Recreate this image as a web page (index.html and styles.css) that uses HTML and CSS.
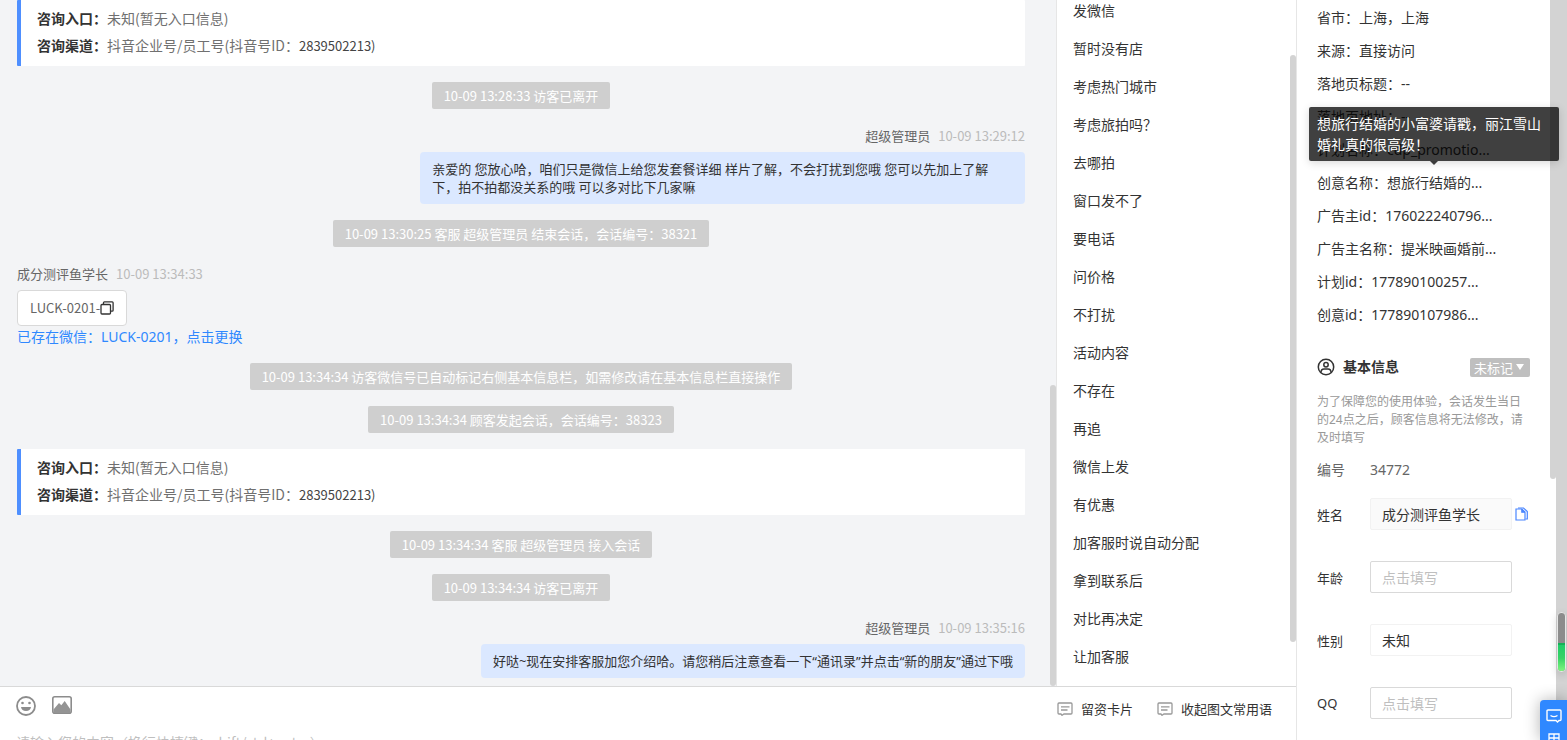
FILE: index.html
```html
<!DOCTYPE html>
<html lang="zh-CN">
<head>
    <meta charset="UTF-8">
    <meta name="viewport" content="width=device-width, initial-scale=1.0">
    <title>在线客服</title>
    <link rel="stylesheet" href="styles.css">
</head>
<body>
    <div class="app">
        <main class="workspace">
            <div class="panels">
                <section class="chat">
                    <div class="entry-card">
                        <p><b>咨询入口：</b>未知(暂无入口信息)</p>
                        <p><b>咨询渠道：</b>抖音企业号/员工号(抖音号ID：<span class="entry-id">2839502213)</span></p>
                    </div>
                    <div class="notice">10-09 13:28:33 访客已离开</div>
                    <div class="message mine">
                        <div class="message-head"><span class="author">超级管理员</span><time>10-09 13:29:12</time></div>
                        <div class="bubble">亲爱的 您放心哈，咱们只是微信上给您发套餐详细 样片了解，不会打扰到您哦 您可以先加上了解下，拍不拍都没关系的哦 可以多对比下几家嘛</div>
                    </div>
                    <div class="notice">10-09 13:30:25 客服 超级管理员 结束会话，会话编号：38321</div>
                    <div class="message">
                        <div class="message-head"><span class="author">成分测评鱼学长</span><time>10-09 13:34:33</time></div>
                        <div class="bubble visitor">LUCK-0201-<button type="button" class="icon-button" aria-label="复制"><svg width="14" height="14" viewBox="0 0 14 14" fill="none" stroke="#333" stroke-width="1.3"><rect x="1" y="3.5" width="9.5" height="9.5" rx="1"/><path d="M3.5 3.5V1.7q0-.9.9-.9h7.8q.9 0 .9.9v7.6q0 .9-.9.9h-1.7"/></svg></button></div>
                        <a class="change-link" href="#">已存在微信：LUCK-0201，点击更换</a>
                    </div>
                    <div class="notice">10-09 13:34:34 访客微信号已自动标记右侧基本信息栏，如需修改请在基本信息栏直接操作</div>
                    <div class="notice">10-09 13:34:34 顾客发起会话，会话编号：38323</div>
                    <div class="entry-card">
                        <p><b>咨询入口：</b>未知(暂无入口信息)</p>
                        <p><b>咨询渠道：</b>抖音企业号/员工号(抖音号ID：<span class="entry-id">2839502213)</span></p>
                    </div>
                    <div class="notice">10-09 13:34:34 客服 超级管理员 接入会话</div>
                    <div class="notice">10-09 13:34:34 访客已离开</div>
                    <div class="message mine">
                        <div class="message-head"><span class="author">超级管理员</span><time>10-09 13:35:16</time></div>
                        <div class="bubble">好哒~现在安排客服加您介绍哈。请您稍后注意查看一下“通讯录”并点击“新的朋友”通过下哦</div>
                    </div>
                    <div class="scroll-thumb chat-thumb"></div>
                </section>

                <nav class="phrases">
                    <ul>
                        <li>发微信</li>
                        <li>暂时没有店</li>
                        <li>考虑热门城市</li>
                        <li>考虑旅拍吗？</li>
                        <li>去哪拍</li>
                        <li>窗口发不了</li>
                        <li>要电话</li>
                        <li>问价格</li>
                        <li>不打扰</li>
                        <li>活动内容</li>
                        <li>不存在</li>
                        <li>再追</li>
                        <li>微信上发</li>
                        <li>有优惠</li>
                        <li>加客服时说自动分配</li>
                        <li>拿到联系后</li>
                        <li>对比再决定</li>
                        <li>让加客服</li>
                    </ul>
                    <div class="scroll-thumb phrases-thumb"></div>
                </nav>
            </div>

            <footer class="composer">
                <div class="toolbar">
                    <button type="button" class="icon-button" aria-label="表情">
                        <svg width="20" height="20" viewBox="0 0 20 20"><circle cx="10" cy="10" r="9" fill="none" stroke="#8c8c8c" stroke-width="1.8"/><circle cx="6.5" cy="7" r="1.3" fill="#8c8c8c"/><circle cx="13.5" cy="7" r="1.3" fill="#8c8c8c"/><path d="M5 11h10q-.6 4-5 4t-5-4z" fill="#8c8c8c"/></svg>
                    </button>
                    <button type="button" class="icon-button" aria-label="图片">
                        <svg width="20" height="18" viewBox="0 0 20 18"><rect x=".8" y=".8" width="18.4" height="16.4" rx="2" fill="none" stroke="#8c8c8c" stroke-width="1.6"/><path d="M1.500 13.500L7 7l2.300 2.300L12.700 5l5.800 8.500V17h-17z" fill="#949494"/></svg>
                    </button>
                    <div class="tools-right">
                        <button type="button" class="text-button"><svg width="16" height="14" viewBox="0 0 16 14" fill="none" stroke="#999" stroke-width="1.3"><path d="M2 1h12q1 0 1 1v9q0 1-1 1H7l-2 1.3L4 12H2q-1 0-1-1V2q0-1 1-1zM4 4.800h8.500M4 8h6.500"/></svg>留资卡片</button>
                        <button type="button" class="text-button"><svg width="16" height="14" viewBox="0 0 16 14" fill="none" stroke="#999" stroke-width="1.3"><path d="M2 1h12q1 0 1 1v9q0 1-1 1H7l-2 1.3L4 12H2q-1 0-1-1V2q0-1 1-1zM4 4.800h8.500M4 8h6.500"/></svg>收起图文常用语</button>
                    </div>
                </div>
                <textarea aria-label="消息内容" placeholder="请输入您的内容（换行快捷键：shift/ctrl+enter）"></textarea>
            </footer>
        </main>

        <aside class="visitor-info">
            <ul class="source-list">
                <li>省市：上海，上海</li>
                <li>来源：直接访问</li>
                <li>落地页标题：--</li>
                <li>落地页地址：--</li>
                <li>计划名称：cdp_promotio...</li>
                <li>创意名称：想旅行结婚的...</li>
                <li>广告主id：176022240796...</li>
                <li>广告主名称：提米映画婚前...</li>
                <li>计划id：177890100257...</li>
                <li>创意id：177890107986...</li>
            </ul>

            <div class="info-head">
                <svg width="18" height="18" viewBox="0 0 18 18" fill="none" stroke="#333" stroke-width="1.5"><circle cx="9" cy="9" r="7.700"/><circle cx="9" cy="6.800" r="2.200"/><path d="M4 14.500q0-3.500 3-3.500h4q3 0 3 3.500"/></svg>
                <h2>基本信息</h2>
                <button type="button" class="tag">未标记<svg width="8" height="6" viewBox="0 0 8 6"><path d="M0 0h8L4 6z" fill="#fff"/></svg></button>
            </div>
            <p class="tip">为了保障您的使用体验，会话发生当日的24点之后，顾客信息将无法修改，请及时填写</p>

            <div class="number-row"><span>编号</span><span>34772</span></div>
            <form class="fields">
                <div class="field">
                    <label for="name">姓名</label>
                    <input type="text" id="name" class="filled" value="成分测评鱼学长">
                    <button type="button" class="icon-button" aria-label="复制姓名"><svg width="13" height="14" viewBox="0 0 13 14" fill="none" stroke="#4a86ff" stroke-width="1.2"><path d="M3 1h5.500L12.300 4.500V12H10.500"/><path d="M1 2h5.800L10 5v8H1z"/><path d="M6.800 2v3.200H10" fill="#4a86ff"/></svg></button>
                </div>
                <div class="field">
                    <label for="age">年龄</label>
                    <input type="text" id="age" placeholder="点击填写">
                </div>
                <div class="field">
                    <label for="gender">性别</label>
                    <select id="gender"><option>未知</option></select>
                </div>
                <div class="field">
                    <label for="qq">QQ</label>
                    <input type="text" id="qq" placeholder="点击填写">
                </div>
            </form>

            <div class="scroll-thumb info-thumb"></div>
            <div class="page-track"></div>
            <div class="tooltip" role="tooltip">想旅行结婚的小富婆请戳，丽江雪山婚礼真的很高级！</div>
            <div class="level"><div class="level-fill"></div></div>
            <div class="float-dock">
                <svg width="16" height="14" viewBox="0 0 16 14" fill="none" stroke="#fff" stroke-width="1.400"><path d="M2 1h12q1 0 1 1v8.500q0 1-1 1h-1l-1.500 1.500-1.500-1.500H2q-1 0-1-1V2q0-1 1-1z"/><path d="M4.500 6.500q3.500 2.200 7 0"/></svg>
                <svg width="12" height="12" viewBox="0 0 12 12" fill="none" stroke="#fff" stroke-width="1.300"><path d="M1 1h10v10H1zM6 1v10M1 5h10"/></svg>
            </div>
        </aside>
    </div>
</body>
</html>
```
FILE: styles.css
```css
* {
    box-sizing: border-box;
}

body {
    margin: 0;
    font-family: "Noto Sans CJK SC", sans-serif;
    font-size: 14px;
    color: #333;
}

ul, p, h2 {
    margin: 0;
    padding: 0;
    list-style: none;
}

button, input, select, textarea {
    font-family: inherit;
    font-size: 14px;
    color: #333;
}

button {
    padding: 0;
    border: none;
    background: none;
    cursor: pointer;
}

.icon-button {
    display: inline-flex;
    flex: none;
}

.app {
    display: flex;
    height: 100vh;
    overflow: hidden;
    background-color: #fff;
}

.workspace {
    flex: 1;
    display: flex;
    flex-direction: column;
    min-width: 0;
}

.panels {
    flex: 1;
    display: flex;
    min-height: 0;
}

/* conversation */
.chat {
    position: relative;
    flex: 1;
    display: flex;
    flex-direction: column;
    justify-content: flex-end;
    align-items: center;
    gap: 16px;
    padding: 0 31px 8px 17px;
    overflow: hidden;
    background-color: #f3f4f6;
}

.entry-card {
    align-self: stretch;
    padding: 5px 16px 7px;
    border-left: 4px solid #4e8fff;
    border-radius: 1px;
    line-height: 27px;
    color: #707070;
    background-color: #fff;
}

.entry-card b {
    color: #333;
}

.entry-id {
    font-size: 13px;
    color: #444;
}

.notice {
    padding: 1px 12px 0;
    border-radius: 2px;
    font-size: 13px;
    line-height: 26px;
    color: #fff;
    background-color: #cfcfcf;
}

.message {
    align-self: stretch;
    display: flex;
    flex-direction: column;
    align-items: flex-start;
}

.message.mine {
    align-items: flex-end;
}

.message-head {
    display: flex;
    gap: 8px;
    margin-bottom: 5px;
    font-size: 13px;
    line-height: 22px;
}

.author {
    color: #666;
}

time {
    color: #bbb;
}

.bubble {
    max-width: 60%;
    padding: 8px 12px;
    border-radius: 4px;
    font-family: "Noto Sans", "Noto Sans CJK SC", sans-serif;
    font-size: 13px;
    line-height: 18px;
    background-color: #dbe8ff;
}

.visitor {
    display: flex;
    align-items: center;
    border: 1px solid #d9d9d9;
    font-family: "Noto Sans CJK SC", sans-serif;
    color: #666;
    background-color: #fff;
}

.change-link {
    font-family: "Noto Sans", "Noto Sans CJK SC", sans-serif;
    line-height: 21px;
    color: #2f88ff;
    text-decoration: none;
}

/* quick phrases */
.phrases {
    position: relative;
    flex: none;
    display: flex;
    flex-direction: column;
    justify-content: flex-end;
    width: 240px;
    padding: 0 16px 11px;
    overflow: hidden;
    border-left: 1px solid #e6e6e6;
}

.phrases li {
    line-height: 38px;
}

.scroll-thumb {
    position: absolute;
    right: 0;
    width: 6px;
    border-radius: 3px;
    background-color: #d3d3d3;
}

.chat-thumb {
    top: 385px;
    bottom: 0;
}

.phrases-thumb {
    top: 55px;
    bottom: 44px;
}

/* composer */
.composer {
    flex: none;
    height: 54px;
    padding: 9px 16px 0;
    overflow: hidden;
    border-top: 1px solid #d9d9d9;
}

.toolbar {
    display: flex;
    align-items: flex-start;
    gap: 16px;
    height: 26px;
}

.tools-right {
    display: flex;
    gap: 24px;
    margin-left: auto;
    padding-right: 8px;
}

.text-button {
    display: flex;
    align-items: center;
    gap: 8px;
    font-size: 13px;
    line-height: 26px;
}

.composer textarea {
    display: block;
    width: 100%;
    height: 80px;
    padding: 10px 0;
    border: none;
    outline: none;
    resize: none;
    line-height: 20px;
}

::placeholder {
    color: #bfbfbf;
}

/* visitor details */
.visitor-info {
    position: relative;
    flex: none;
    width: 271px;
    padding: 1px 37px 0 20px;
    border-left: 1px solid #e6e6e6;
    font-family: "Noto Sans", "Noto Sans CJK SC", sans-serif;
}

.source-list li {
    line-height: 33px;
    white-space: nowrap;
}

.info-head {
    display: flex;
    align-items: center;
    margin-top: 25px;
    height: 22px;
}

.info-head h2 {
    margin-left: 8px;
    font-size: 14px;
    line-height: 22px;
}

.tag {
    display: flex;
    align-items: center;
    gap: 3px;
    height: 19px;
    margin-left: auto;
    padding: 0 6px 0 4px;
    border-radius: 2px;
    font-size: 13px;
    color: #fff;
    background-color: #bfbfbf;
}

.tip {
    margin-top: 15px;
    font-size: 12px;
    line-height: 18px;
    color: #999;
}

.number-row {
    display: flex;
    margin-top: 12px;
    line-height: 22px;
    color: #666;
}

.number-row span:first-child {
    width: 53px;
}

.fields {
    display: flex;
    flex-direction: column;
    gap: 31px;
    margin-top: 17px;
}

.field {
    display: flex;
    align-items: center;
    height: 32px;
    margin-right: -18px;
}

.field label {
    flex: none;
    width: 53px;
    font-size: 13px;
}

.field input,
.field select {
    width: 142px;
    height: 32px;
    padding: 0 11px;
    border: 1px solid #d9d9d9;
    border-radius: 2px;
    outline: none;
    background-color: #fff;
}

.field select {
    appearance: none;
    border-color: #f2f2f2;
}

.field .filled {
    border-color: #f2f2f2;
    background-color: #fafafa;
}

.field .icon-button {
    margin-left: 3px;
}

.info-thumb {
    top: 0;
    right: 11px;
    height: 479px;
    border-radius: 0 0 3px 3px;
}

.page-track {
    position: absolute;
    top: 0;
    right: 0;
    bottom: 0;
    width: 11px;
    background-color: #d3d3d3;
}

.tooltip {
    position: absolute;
    top: 107px;
    right: 8px;
    width: 250px;
    padding: 6px 8px;
    border-radius: 2px;
    line-height: 21px;
    color: #fff;
    background-color: rgba(0, 0, 0, 0.75);
    box-shadow: 0 2px 8px rgba(0, 0, 0, 0.15);
}

.tooltip::after {
    content: "";
    position: absolute;
    top: 100%;
    left: 50%;
    margin-left: -4px;
    border: 4px solid transparent;
    border-bottom: none;
    border-top-color: rgba(0, 0, 0, 0.75);
}

.level {
    position: absolute;
    top: 612px;
    right: 1px;
    display: flex;
    align-items: flex-end;
    width: 9px;
    height: 60px;
    overflow: hidden;
    border: 1px solid #e6e6e6;
    border-radius: 4px;
    background-color: #8c8c8c;
    box-shadow: 0 3px 8px rgba(0, 0, 0, 0.15);
}

.level-fill {
    width: 100%;
    height: 28px;
    border-top: 2px solid #14b257;
    background: linear-gradient(#20cc68, #37d266 50%, #7ff57f);
}

.float-dock {
    position: absolute;
    right: 0;
    bottom: 0;
    display: flex;
    flex-direction: column;
    align-items: center;
    gap: 10px;
    width: 27px;
    height: 40px;
    padding-top: 9px;
    overflow: hidden;
    border-top-left-radius: 4px;
    background-color: #2f88ff;
    box-shadow: 0 0 16px rgba(0, 0, 0, 0.3);
}

.float-dock svg {
    flex: none;
}
```
